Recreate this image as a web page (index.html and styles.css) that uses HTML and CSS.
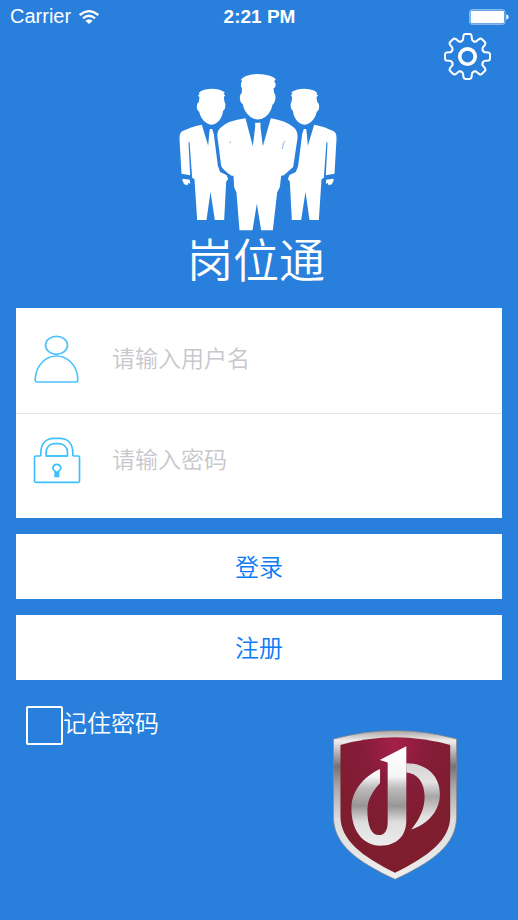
FILE: index.html
```html
<!DOCTYPE html>
<html lang="zh-CN">
<head>
  <meta charset="utf-8">
  <meta name="viewport" content="width=device-width, initial-scale=1">
  <title>岗位通</title>
  <link rel="stylesheet" href="styles.css">
</head>
<body>
  <div class="status">
    <div class="carrier">
      <span>Carrier</span>
      <svg class="wifi" viewBox="0 0 60 42" aria-hidden="true">
        <g fill="none" stroke="#fff" stroke-width="7">
          <path d="M2 15Q30 -8 58 15"/>
          <path d="M12 25Q30 9 48 25"/>
        </g>
        <path d="M19 32Q30 23 41 32L30 42Z" fill="#fff"/>
      </svg>
    </div>
    <time>2:21 PM</time>
    <svg class="battery" viewBox="0 0 120 48" aria-hidden="true">
      <rect x="2" y="2" width="106" height="44" rx="7" fill="none" stroke="#cfe3f9" stroke-width="2"/>
      <rect x="5" y="5" width="100" height="38" rx="4" fill="#fff"/>
      <path d="M112 16Q119 18 119 24T112 32Z" fill="#fff"/>
    </svg>
  </div>

  <header class="hero">
    <div class="brand">
      <svg class="people" viewBox="29 27 473 471" aria-hidden="true">
        <defs>
          <g id="colleague">
            <path d="M88 84Q97 72 126 71Q153 72 166 82L162 86L167 91L163 97L165 110Q170 116 167 128Q164 136 161 137Q157 163 141 174Q126 184 111 174Q94 163 89 140Q83 138 82 126Q82 114 88 111L90 96L85 92L90 88Z"/>
            <path d="M97 179Q62 186 38 199Q29 205 30 222L36 326L62 331L57 233L60 230L68 338L75 343L83 465H111L123 380L136 465H164L170 350L176 342L171 330L152 321L145 302L133 208L128 192H121L119 207L116 242Z"/>
            <path d="M40 341L61 344L62 356L56 354L54 361L44 358L38 345Z"/>
          </g>
        </defs>
        <g fill="#fff">
          <use href="#colleague"/>
          <use href="#colleague" transform="translate(531 0) scale(-1 1)"/>
        </g>
        <path d="M228 160Q174 167 153 188Q142 197 144 217L155 302Q158 313 186 332H192L194 367L201 383L210 496H249L262 416L275 496H310L323 382L331 367L335 332L343 331L371 306L384 220Q386 197 371 186Q348 167 304 160L280 244L273 187V173H257V187L250 244Z" fill="#fff" stroke="#2980dc" stroke-width="14" paint-order="stroke"/>
        <path d="M214 45Q223 29 264 27Q305 28 319 43L314 49L319 58L317 66L312 71L314 84Q320 91 317 105Q315 116 309 119Q304 143 287 156Q265 171 243 156Q224 142 220 118Q212 113 211 99Q211 87 217 84V70Q211 58 218 48Z" fill="#fff"/>
        <path d="M338 252L342 234L347 228M182 229V235" fill="none" stroke="#8bb9ea" stroke-width="3"/>
      </svg>
      <h1>岗位通</h1>
    </div>
    <button class="settings" type="button" aria-label="设置">
      <svg viewBox="-70 -70 140 140" aria-hidden="true">
        <defs><path id="tooth" d="M-19 -45Q-13 -47 -13 -53L-12 -62Q-11 -67 -6 -67H6Q11 -67 12 -62L13 -53Q13 -47 19 -45"/></defs>
        <g fill="none" stroke="#fff" stroke-width="6" stroke-linecap="round">
          <use href="#tooth"/>
          <use href="#tooth" transform="rotate(45)"/>
          <use href="#tooth" transform="rotate(90)"/>
          <use href="#tooth" transform="rotate(135)"/>
          <use href="#tooth" transform="rotate(180)"/>
          <use href="#tooth" transform="rotate(225)"/>
          <use href="#tooth" transform="rotate(270)"/>
          <use href="#tooth" transform="rotate(315)"/>
          <circle r="23" stroke-width="11"/>
        </g>
      </svg>
    </button>
  </header>

  <main>
    <form class="login">
      <div class="fields">
        <div class="field">
          <label for="user" aria-label="用户名">
            <svg viewBox="0 0 141 144" aria-hidden="true" fill="none" stroke="#4cc4fa" stroke-width="5">
              <ellipse cx="69" cy="31" rx="33" ry="27"/>
              <path d="M69 63C99 63 131 88 133 132Q134 141 127 141H11Q4 141 5 132C8 88 39 63 69 63Z"/>
            </svg>
          </label>
          <input id="user" type="text" placeholder="请输入用户名">
        </div>
        <div class="field field-password">
          <label for="password" aria-label="密码">
            <svg viewBox="0 0 141 144" aria-hidden="true" fill="none" stroke="#3dc0fb" stroke-width="5">
              <path d="M22 60V51C22 22 38 7 62 7H78C102 7 118 22 118 51V60"/>
              <path d="M38 60V49C38 33 49 23 62 23H76C91 23 102 33 102 49V60Z"/>
              <path d="M22 60H7Q3 60 3 64V135Q3 139 7 139H134Q138 139 138 135V64Q138 60 134 60H118M38 60H102"/>
              <path d="M65 106Q58 102 58 95Q60 85 70 85Q80 85 82 95Q82 102 75 106"/>
              <path d="M65 104V121H75V104M70 106V119"/>
            </svg>
          </label>
          <input id="password" type="password" placeholder="请输入密码">
        </div>
      </div>
      <button class="action" type="submit">登录</button>
      <button class="action" type="button">注册</button>
      <div class="extras">
        <label class="remember"><input type="checkbox"><span>记住密码</span></label>
        <svg class="shield" viewBox="22 28 374 451" aria-hidden="true">
          <defs>
            <linearGradient id="rim" x1="0" y1="0" x2="0" y2="1">
              <stop offset="0" stop-color="#aaa5a5"/><stop offset=".07" stop-color="#f0eeee"/>
              <stop offset=".15" stop-color="#b5b2b3"/><stop offset=".24" stop-color="#777375"/>
              <stop offset=".38" stop-color="#aaa8aa"/><stop offset=".6" stop-color="#dedddd"/>
              <stop offset="1" stop-color="#eeeeee"/>
            </linearGradient>
            <radialGradient id="field" cx=".5" cy=".05" r=".65">
              <stop offset="0" stop-color="#a61f4b"/><stop offset=".45" stop-color="#861c3a"/>
              <stop offset="1" stop-color="#7d1d2d"/>
            </radialGradient>
            <linearGradient id="silver" gradientUnits="userSpaceOnUse" x1="0" y1="78" x2="0" y2="376">
              <stop offset="0" stop-color="#fff"/><stop offset=".3" stop-color="#f5f5f5"/>
              <stop offset=".42" stop-color="#bdbbbb"/><stop offset=".6" stop-color="#999596"/>
              <stop offset=".76" stop-color="#dedddd"/><stop offset="1" stop-color="#ededed"/>
            </linearGradient>
            <linearGradient id="wing" gradientUnits="userSpaceOnUse" x1="0" y1="130" x2="0" y2="376">
              <stop offset="0" stop-color="#d5d3d3"/><stop offset=".22" stop-color="#e4e2e2"/>
              <stop offset=".4" stop-color="#a9a5a6"/><stop offset=".65" stop-color="#e4e2e2"/>
              <stop offset="1" stop-color="#eeeeee"/>
            </linearGradient>
          </defs>
          <path d="M24 55Q118 30 209 30T394 55V288C394 375 319 425 209 477C99 425 24 375 24 288Z" fill="url(#rim)" stroke="#8f8580" stroke-width="2"/>
          <path d="M45 73Q128 50 209 50T375 73V288C375 359 307 409 209 457C111 409 45 359 45 288Z" fill="url(#field)"/>
          <path d="M243 128C307 128 345 169 344 222C343 276 304 312 258 327C283 296 298 266 298 229C298 186 276 158 243 156Z" fill="url(#wing)"/>
          <path d="M164 145C112 169 78 213 78 264C78 329 111 375 165 376C215 375 243 346 243 300V77L163 118L187 126V305C187 329 178 344 161 344C137 344 126 315 126 269C126 235 143 211 164 187Z" fill="url(#silver)"/>
        </svg>
      </div>
    </form>
  </main>
</body>
</html>
```
FILE: styles.css
```css
* {
  box-sizing: border-box;
}

body {
  margin: 0;
  min-height: 100vh;
  background: #2980dc;
  color: #fff;
  font-family: "Liberation Sans", "Noto Sans CJK SC", sans-serif;
}

button,
input {
  font-family: inherit;
}

svg {
  display: block;
}

.status {
  display: grid;
  grid-template-columns: 1fr auto 1fr;
  align-items: center;
  height: 33px;
  padding: 0 9px 0 10px;
  font-size: 19px;
}

.carrier {
  display: flex;
  align-items: center;
  gap: 8px;
  font-size: 20px;
}

.wifi {
  width: 20px;
  height: 14px;
}

.status time {
  font-weight: bold;
}

.battery {
  width: 40px;
  height: 16px;
  justify-self: end;
}

.hero {
  display: grid;
}

.brand,
.settings {
  grid-area: 1 / 1;
}

.brand {
  display: flex;
  flex-direction: column;
  align-items: center;
  padding: 41px 2px 0 0;
}

.people {
  width: 158px;
  height: 157px;
}

.brand h1 {
  margin: 0;
  padding: 0 4px 2px 0;
  font-size: 46px;
  font-weight: 350;
  line-height: 60px;
}

.settings {
  justify-self: end;
  align-self: start;
  width: 47px;
  height: 47px;
  margin-right: 27px;
  padding: 0;
  border: 0;
  background: none;
}

.login {
  display: flex;
  flex-direction: column;
  gap: 16px;
  padding: 15px 16px 16px;
}

.fields {
  background: #fff;
}

.field {
  display: flex;
  align-items: center;
  gap: 31px;
  height: 105px;
  padding: 0 17px 3px;
}

.field-password {
  padding-bottom: 12px;
  border-top: 1px solid #e4e4e6;
}

.field svg {
  width: 48px;
  height: 48px;
}

.field input {
  flex: 1;
  min-width: 0;
  padding: 0;
  border: 0;
  outline: 0;
  background: none;
  color: #333;
  font-size: 23px;
  font-weight: 350;
  line-height: 34px;
}

.field input::placeholder {
  color: #c7c7cd;
  opacity: 1;
}

.action {
  height: 65px;
  padding: 0 0 2px;
  border: 0;
  background: #fff;
  color: #087bf5;
  font-size: 24px;
  font-weight: 350;
}

.extras {
  display: flex;
  justify-content: space-between;
  align-items: flex-start;
  padding: 10px 44px 0 10px;
}

.remember {
  display: flex;
  align-items: center;
  font-size: 24px;
  font-weight: 350;
}

.remember span {
  line-height: 36px;
  padding-bottom: 3px;
}

.remember input {
  appearance: none;
  width: 37px;
  height: 39px;
  margin: 0;
  border: 2px solid #fff;
  border-radius: 2px;
}

.shield {
  width: 126px;
  height: 150px;
  margin-top: 24px;
}
```
